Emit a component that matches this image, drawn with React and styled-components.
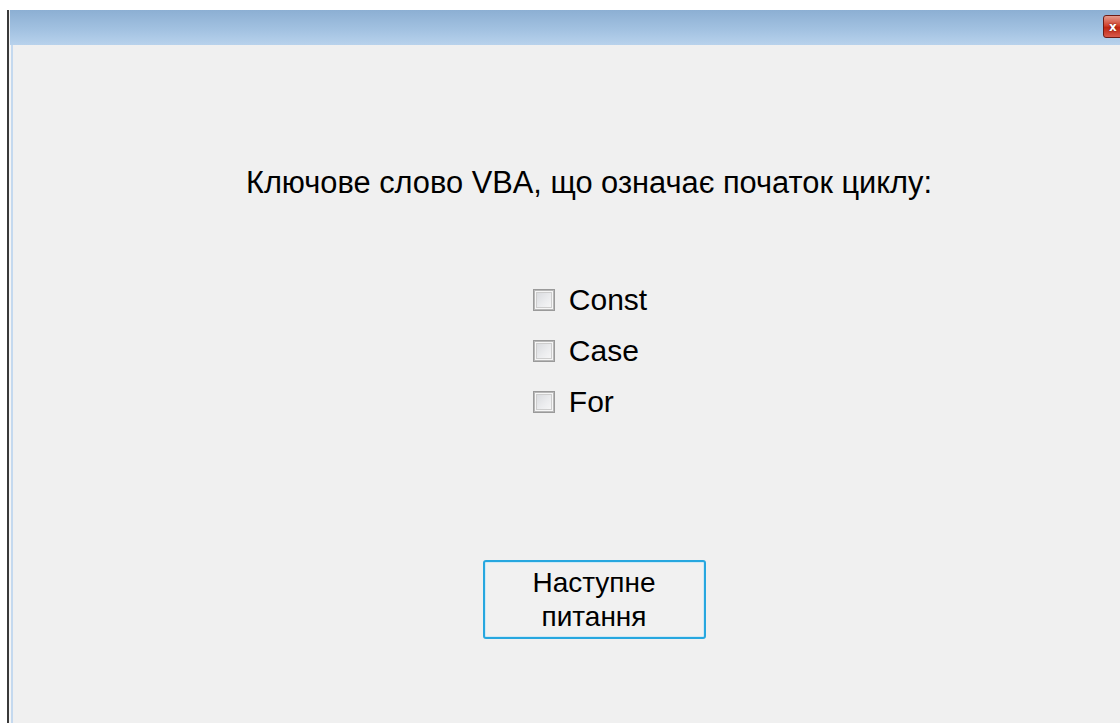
import styled, { createGlobalStyle } from "styled-components";

const GlobalStyle = createGlobalStyle`
  html, body {
    margin: 0;
    padding: 0;
    background: #ffffff;
  }
  body {
    font-family: "Liberation Sans", Arial, sans-serif;
  }
`;

const Screen = styled.div`
  width: 1120px;
  height: 723px;
  overflow: hidden;
  background: #ffffff;
  padding: 10px 0 0 7px;
  box-sizing: border-box;
`;

const Window = styled.div`
  width: 1154px;
  height: 713px;
  display: flex;
  flex-direction: column;
  border-left: 2px solid #3a3a3a;
  box-shadow: inset 2px 0 0 #f4f4f4, inset 4px 0 0 #c4d9ef;
  background: #f0f0f0;
`;

const TitleBar = styled.div`
  height: 35px;
  flex: none;
  margin-left: 1px;
  display: flex;
  justify-content: flex-end;
  align-items: flex-start;
  padding-right: 17px;
  background: linear-gradient(to bottom, #8cafd3 0%, #a4c3e2 60%, #b8d2ec 100%);
`;

const CloseButton = styled.div`
  width: 43px;
  height: 23px;
  margin-top: 5px;
  box-sizing: border-box;
  border: 1px solid #6d1c16;
  border-radius: 3px;
  background: linear-gradient(to bottom, #e49b8e 0%, #d2442f 45%, #bf2612 55%, #d8594a 100%);
  display: flex;
  align-items: center;
  justify-content: flex-start;
  padding-left: 5px;
  color: #ffffff;
  font-family: "DejaVu Sans", sans-serif;
  font-weight: bold;
  font-size: 12px;
  text-shadow: 0 0 2px #5a1008;
`;

const Body = styled.div`
  flex: 1;
  display: flex;
  flex-direction: column;
  align-items: center;
  margin-left: 6px;
  padding-top: 121px;
`;

const Question = styled.div`
  font-size: 30.8px;
  color: #000000;
  line-height: 34px;
`;

const Options = styled.div`
  display: flex;
  flex-direction: column;
  gap: 17px;
  margin-top: 83px;
  margin-left: 2px;
`;

const Option = styled.label`
  display: flex;
  align-items: center;
  gap: 14px;
  font-size: 30px;
  line-height: 34px;
  color: #000000;
`;

const Box = styled.span`
  width: 22px;
  height: 22px;
  box-sizing: border-box;
  border: 1px solid #9a9a9a;
  box-shadow: inset 0 0 0 1px #b8b8b8, inset 0 0 0 2px #f6f6f6, inset 0 0 0 3px #cdcdcd;
  background: linear-gradient(135deg, #d4d6da 0%, #ebecee 55%, #fafafa 100%);
`;

const NextButton = styled.button`
  margin-top: 141px;
  margin-left: 10px;
  width: 223px;
  height: 79px;
  box-sizing: border-box;
  border: 2px solid #27a7df;
  border-radius: 3px;
  background: #f1f1f1;
  box-shadow: inset 0 0 0 1px #cfe9f6;
  font-family: "Liberation Sans", Arial, sans-serif;
  font-size: 28px;
  line-height: 34px;
  color: #000000;
  padding: 0;
`;

const options = ["Const", "Case", "For"];

export default function App() {
  return (
    <Screen>
      <GlobalStyle />
      <Window>
        <TitleBar>
          <CloseButton>x</CloseButton>
        </TitleBar>
        <Body>
          <Question>Ключове слово VBA, що означає початок циклу:</Question>
          <Options>
            {options.map((name) => (
              <Option key={name}>
                <Box />
                {name}
              </Option>
            ))}
          </Options>
          <NextButton>
            Наступне
            <br />
            питання
          </NextButton>
        </Body>
      </Window>
    </Screen>
  );
}
